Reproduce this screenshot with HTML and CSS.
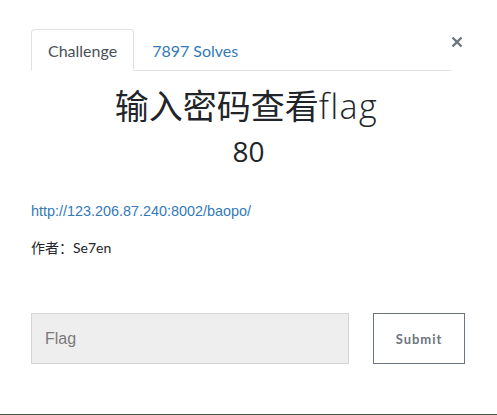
FILE: index.html
```html
<!DOCTYPE html>
<html lang="zh">
<head>
<meta charset="utf-8">
<title>Challenge</title>
<link rel="stylesheet" href="styles.css">
</head>
<body>
<div class="modal">
  <button class="close" type="button" aria-label="Close">
    <svg width="12" height="12" viewBox="0 0 12 12"><path d="M1.5 1.5 L10.5 10.5 M10.5 1.5 L1.5 10.5" stroke="#6c757d" stroke-width="2.4" stroke-linecap="butt"/></svg>
  </button>
  <nav class="tabs">
    <a class="tab active">Challenge</a>
    <a class="tab">7897 Solves</a>
  </nav>
  <h2 class="title">输入密码查看<span class="title-latin">flag</span></h2>
  <h3 class="value">80</h3>
  <div class="desc">
    <p class="link"><a href="#">http://123.206.87.240:8002/baopo/</a></p>
    <p class="author">作者：Se7en</p>
  </div>
  <form class="submit-row">
    <input class="flag-input" type="text" placeholder="Flag">
    <button class="submit" type="button">Submit</button>
  </form>
</div>
</body>
</html>
```
FILE: styles.css
```css
html, body {
  margin: 0;
  padding: 0;
  background: #ffffff;
}
.modal {
  position: relative;
  box-sizing: border-box;
  height: 415px;
  padding: 29px 31px 0 31px;
  border-bottom: 1px solid #44573f;
  font-family: Lato, "Noto Sans CJK SC", sans-serif;
}
.close {
  position: absolute;
  top: 36px;
  right: 34px;
  border: 0;
  background: none;
  padding: 0;
  width: 12px;
  height: 12px;
  display: block;
}
.close svg { display: block; }
.tabs {
  display: flex;
  width: 420px;
  border-bottom: 1px solid #dee2e6;
}
.tab {
  display: block;
  box-sizing: border-box;
  height: 42px;
  line-height: 42px;
  padding: 0 17px;
  font-size: 16px;
  color: #337ab7;
  margin-bottom: -1px;
  border: 1px solid transparent;
  border-radius: 4px 4px 0 0;
}
.tab.active {
  color: #495057;
  padding: 0 16px 0 16px;
  border-color: #dee2e6 #dee2e6 #ffffff;
  background: #ffffff;
}
.title {
  margin: 14px 4px 0 0;
  text-align: center;
  font-weight: 400;
  font-size: 34px;
  line-height: 42px;
  color: #212529;
  font-family: "Open Sans", "Noto Sans CJK SC", sans-serif;
}
.title-latin {
  font-weight: 300;
  letter-spacing: 1.5px;
}
.value {
  margin: 7px 0 0;
  text-align: center;
  font-weight: 400;
  font-size: 28px;
  line-height: 34px;
  color: #212529;
  font-family: "Open Sans", sans-serif;
}
.desc {
  margin-top: 33px;
}
.desc p { margin: 0; }
.link a {
  color: #337ab7;
  text-decoration: none;
  font-size: 14.4px;
  font-family: "Liberation Sans", Arial, sans-serif;
}
.link { line-height: 18px; }
.author {
  margin-top: 19px !important;
  line-height: 18px;
  font-size: 14px;
  color: #212529;
  font-family: Lato, "Noto Sans CJK SC", sans-serif;
}
.submit-row {
  display: flex;
  gap: 24px;
  margin-top: 56px;
}
.flag-input {
  box-sizing: border-box;
  width: 318px;
  height: 51px;
  margin: 0;
  padding: 0 13px;
  background: #eeeeee;
  border: 1px solid #d4d4d4;
  font-family: "Liberation Sans", Arial, sans-serif;
  font-size: 16px;
  color: #495057;
  outline: none;
}
.flag-input::placeholder { color: #7a7a7a; }
.submit {
  box-sizing: border-box;
  width: 92px;
  height: 51px;
  margin: 0;
  background: #ffffff;
  border: 1px solid #6c757d;
  color: #6c757d;
  font-family: Lato, sans-serif;
  font-weight: 700;
  font-size: 13px;
  letter-spacing: 1px;
}
```
